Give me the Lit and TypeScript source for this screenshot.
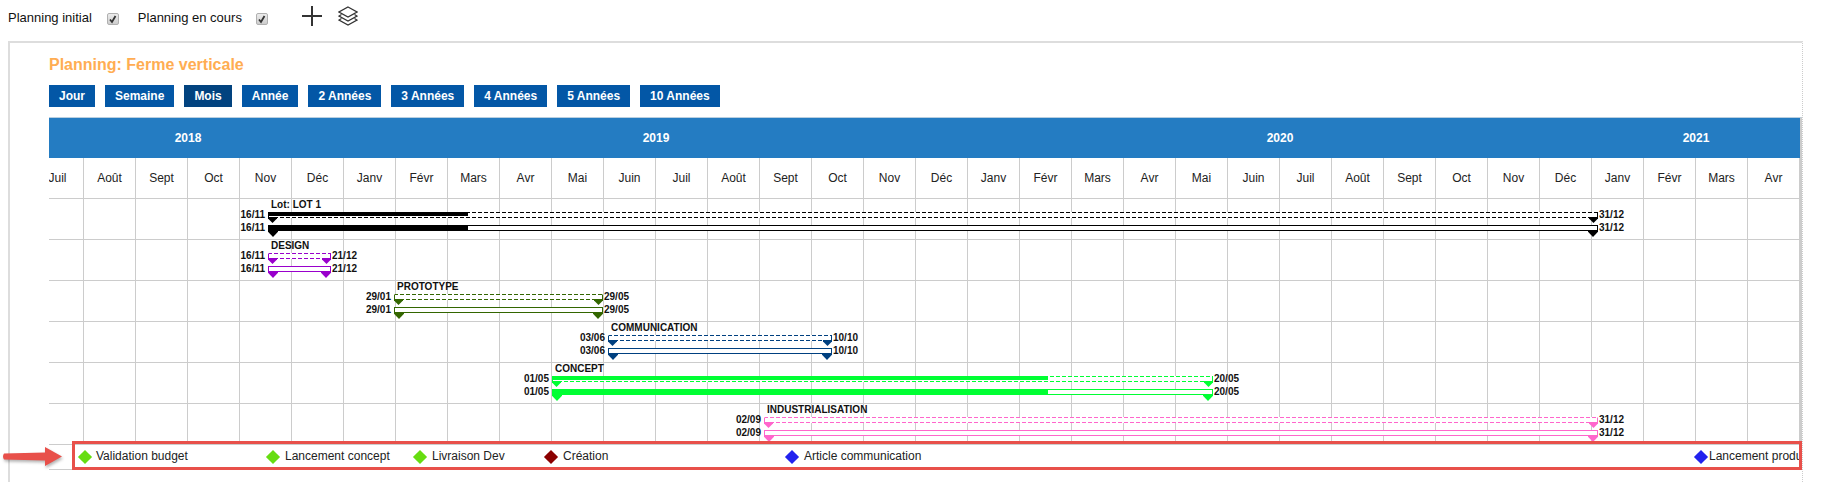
import { LitElement, css, html, nothing } from 'lit';
import { customElement } from 'lit/decorators.js';

const MONTHS = [
  'Juil', 'Août', 'Sept', 'Oct', 'Nov', 'Déc',
  'Janv', 'Févr', 'Mars', 'Avr', 'Mai', 'Juin', 'Juil', 'Août', 'Sept', 'Oct', 'Nov', 'Déc',
  'Janv', 'Févr', 'Mars', 'Avr', 'Mai', 'Juin', 'Juil', 'Août', 'Sept', 'Oct', 'Nov', 'Déc',
  'Janv', 'Févr', 'Mars', 'Avr',
];

const YEARS = [
  { label: '2018', months: 6 },
  { label: '2019', months: 12 },
  { label: '2020', months: 12 },
  { label: '2021', months: 4 },
];

const SCALES = ['Jour', 'Semaine', 'Mois', 'Année', '2 Années', '3 Années', '4 Années', '5 Années', '10 Années'];

// offsets are px from the start of the timeline
const TASKS = [
  { name: 'Lot: LOT 1', color: '#000000', start: 236, end: 1566, progress: 200, from: '16/11', to: '31/12' },
  { name: 'DESIGN', color: '#9900cc', start: 236, end: 299, progress: 0, from: '16/11', to: '21/12' },
  { name: 'PROTOTYPE', color: '#336600', start: 362, end: 571, progress: 0, from: '29/01', to: '29/05' },
  { name: 'COMMUNICATION', color: '#004080', start: 576, end: 800, progress: 0, from: '03/06', to: '10/10' },
  { name: 'CONCEPT', color: '#00ff33', start: 520, end: 1181, progress: 496, from: '01/05', to: '20/05' },
  { name: 'INDUSTRIALISATION', color: '#ff66cc', start: 732, end: 1566, progress: 0, from: '02/09', to: '31/12' },
];

const MILESTONES = [
  { name: 'Validation budget', color: '#66dd11', x: 48, gap: 6 },
  { name: 'Lancement concept', color: '#66dd11', x: 236, gap: 7 },
  { name: 'Livraison Dev', color: '#66dd11', x: 383, gap: 7 },
  { name: 'Création', color: '#8b0000', x: 514, gap: 7 },
  { name: 'Article communication', color: '#2222ee', x: 755, gap: 7 },
  { name: 'Lancement produit', color: '#2222ee', x: 1664, gap: 3 },
];

@customElement('app-root')
export class AppRoot extends LitElement {
  static styles = css`
    :host {
      display: block;
      position: relative;
      height: 482px;
      overflow: hidden;
      background: #fff;
      font-family: 'Liberation Sans', Arial, sans-serif;
      color: #111;
    }

    .toolbar {
      display: flex;
      align-items: center;
      height: 41px;
      padding: 0 0 6px 8px;
      box-sizing: border-box;
      font-size: 13px;
    }

    .first {
      margin-right: 1px;
    }

    .check {
      width: 10px;
      height: 10px;
      margin: 3px 18.5px 0 14.5px;
      border: 1px solid #b0b0b0;
      border-radius: 2px;
      background: linear-gradient(#ececec, #cdcdcd);
      display: flex;
    }

    .check svg {
      width: 10px;
      height: 10px;
    }

    .plus,
    .layers {
      width: 20px;
      height: 20px;
      margin: 0 0 3px 16px;
    }

    .plus {
      margin-left: 15px;
    }

    .panel {
      margin-left: 8px;
      width: 1795px;
      height: 441px;
      box-sizing: border-box;
      padding: 0 0 0 39px;
      border-top: 2px solid #ddd;
      border-left: 2px solid #ddd;
      border-right: 1px dotted #ccc;
    }

    .title {
      height: 42px;
      box-sizing: border-box;
      padding-top: 13px;
      font-size: 16px;
      line-height: 18px;
      font-weight: 700;
      color: #ffad52;
    }

    .scales {
      display: flex;
      gap: 10px;
      height: 22px;
    }

    .scales span {
      padding: 0 10px;
      font-size: 12px;
      line-height: 22px;
      font-weight: 700;
      color: #fff;
      background: #0357a6;
    }

    .scales span.active {
      background: #02437f;
    }

    .chart {
      width: 1751px;
      margin-top: 10px;
      border-top: 1px solid #b9cfe0;
      border-right: 2px solid #ccc;
      overflow: hidden;
    }

    .timeline {
      width: 1768px;
      margin-left: -17px;
    }

    .years {
      display: flex;
      height: 40px;
      background: #247cc2;
    }

    .years span {
      font-size: 12px;
      line-height: 40px;
      font-weight: 700;
      text-align: center;
      color: #fff;
    }

    .months {
      display: grid;
      grid-template-columns: repeat(34, 52px);
      height: 41px;
      border-bottom: 1px solid #ccc;
      box-sizing: border-box;
    }

    .months span {
      border-right: 1px solid #ccc;
      font-size: 12px;
      line-height: 40px;
      text-align: center;
      color: #222;
    }

    .row {
      position: relative;
      height: 41px;
      box-sizing: border-box;
      border-bottom: 1px solid #ccc;
      background-image: linear-gradient(to left, #ccc 1px, transparent 1px);
      background-size: 52px 100%;
    }

    .task {
      position: absolute;
      top: 0;
      height: 40px;
    }

    .name {
      display: block;
      height: 13px;
      padding-left: 3px;
      font-size: 10px;
      line-height: 12px;
      font-weight: 700;
      white-space: nowrap;
      color: #111;
    }

    .bar {
      position: relative;
      height: 6px;
      box-sizing: border-box;
      border: 1px solid var(--c);
      margin-bottom: 7px;
      background: #fff;
    }

    .bar.planned {
      border-top-color: transparent;
      border-bottom-color: transparent;
      background-origin: border-box;
      background-clip: border-box;
      background-repeat: no-repeat;
      background-size: 100% 1px;
      background-position: left top, left bottom;
      background-image:
        repeating-linear-gradient(90deg, var(--c) 0 4px, transparent 4px 6px),
        repeating-linear-gradient(90deg, var(--c) 0 4px, transparent 4px 6px);
    }

    .fill {
      position: absolute;
      left: -1px;
      top: -1px;
      background: var(--c);
    }

    .planned .fill {
      height: 4px;
    }

    .actual .fill {
      height: 6px;
    }

    .date {
      position: absolute;
      top: -4px;
      font-size: 10px;
      line-height: 12px;
      font-weight: 700;
      color: #111;
    }

    .date.from {
      right: calc(100% + 4px);
    }

    .date.to {
      left: calc(100% + 2px);
    }

    .tip {
      position: absolute;
      top: 100%;
      width: 9px;
      height: 6px;
      background: var(--c);
      clip-path: polygon(0 0, 100% 0, 100% 25%, 50% 100%, 0 25%);
    }

    .actual .tip {
      width: 10px;
      height: 7px;
    }

    .tip.from {
      left: -1px;
    }

    .tip.to {
      right: -1px;
    }

    .milestones {
      position: relative;
      height: 24px;
      border-bottom: 1px solid #ccc;
      overflow: hidden;
    }

    .milestone {
      position: absolute;
      top: 0;
      display: flex;
      align-items: center;
      height: 24px;
      font-size: 12px;
      white-space: nowrap;
      color: #222;
    }

    .milestone b {
      font-weight: 400;
      padding-bottom: 2px;
    }

    .diamond {
      width: 10px;
      height: 10px;
      transform: rotate(45deg);
      background: var(--c);
    }

    .callout {
      position: absolute;
      left: 72px;
      top: 441px;
      width: 1730px;
      height: 29px;
      box-sizing: border-box;
      border: 3px solid #e8504a;
    }

    .arrow {
      position: absolute;
      left: 1px;
      top: 442px;
      width: 64px;
      height: 30px;
      filter: drop-shadow(1px 2px 1.5px rgba(0, 0, 0, 0.3));
    }
  `;

  private bar(kind: string, t: (typeof TASKS)[number]) {
    return html`
      <div class="bar ${kind}">
        ${t.progress ? html`<span class="fill" style="width:${t.progress}px"></span>` : nothing}
        <span class="date from">${t.from}</span>
        <span class="date to">${t.to}</span>
        <i class="tip from"></i>
        <i class="tip to"></i>
      </div>
    `;
  }

  private check() {
    return html`
      <span class="check">
        <svg viewBox="0 0 10 10" fill="none" stroke="#333" stroke-width="1.8">
          <path d="M2 5.5 4 8 7.5 2" />
        </svg>
      </span>
    `;
  }

  render() {
    return html`
      <div class="toolbar">
        <span class="first">Planning initial</span>
        ${this.check()}
        <span>Planning en cours</span>
        ${this.check()}
        <svg class="plus" viewBox="0 0 20 20" fill="none" stroke="#333" stroke-width="2">
          <path d="M10 0V20M0 10H20" />
        </svg>
        <svg class="layers" viewBox="0 0 20 20" fill="none" stroke="#333" stroke-width="1.2">
          <path d="M10 1 19 6 10 11 1 6Z" />
          <path d="M3.5 8.5 1 10 10 15 19 10 16.5 8.5" />
          <path d="M3.5 12.5 1 14 10 19 19 14 16.5 12.5" />
        </svg>
      </div>
      <div class="panel">
        <div class="title">Planning: Ferme verticale</div>
        <div class="scales">
          ${SCALES.map((s) => html`<span class=${s === 'Mois' ? 'active' : ''}>${s}</span>`)}
        </div>
        <div class="chart">
          <div class="timeline">
            <div class="years">
              ${YEARS.map((y) => html`<span style="width:${y.months * 52}px">${y.label}</span>`)}
            </div>
            <div class="months">${MONTHS.map((m) => html`<span>${m}</span>`)}</div>
            ${TASKS.map(
              (t) => html`
                <div class="row">
                  <div class="task" style="left:${t.start}px;width:${t.end - t.start}px;--c:${t.color}">
                    <span class="name">${t.name}</span>
                    ${this.bar('planned', t)} ${this.bar('actual', t)}
                  </div>
                </div>
              `,
            )}
            <div class="milestones">
              ${MILESTONES.map(
                (m) => html`
                  <div class="milestone" style="left:${m.x}px;--c:${m.color}">
                    <span class="diamond"></span>
                    <b style="margin-left:${m.gap}px">${m.name}</b>
                  </div>
                `,
              )}
            </div>
          </div>
        </div>
      </div>
      <div class="callout"></div>
      <svg class="arrow" viewBox="0 0 64 30">
        <path d="M3 11.5 44 10.5V5L61 14.5 44 24V18.5L3 17.5Q1 14.5 3 11.5Z" fill="#e8504a" />
      </svg>
    `;
  }
}
